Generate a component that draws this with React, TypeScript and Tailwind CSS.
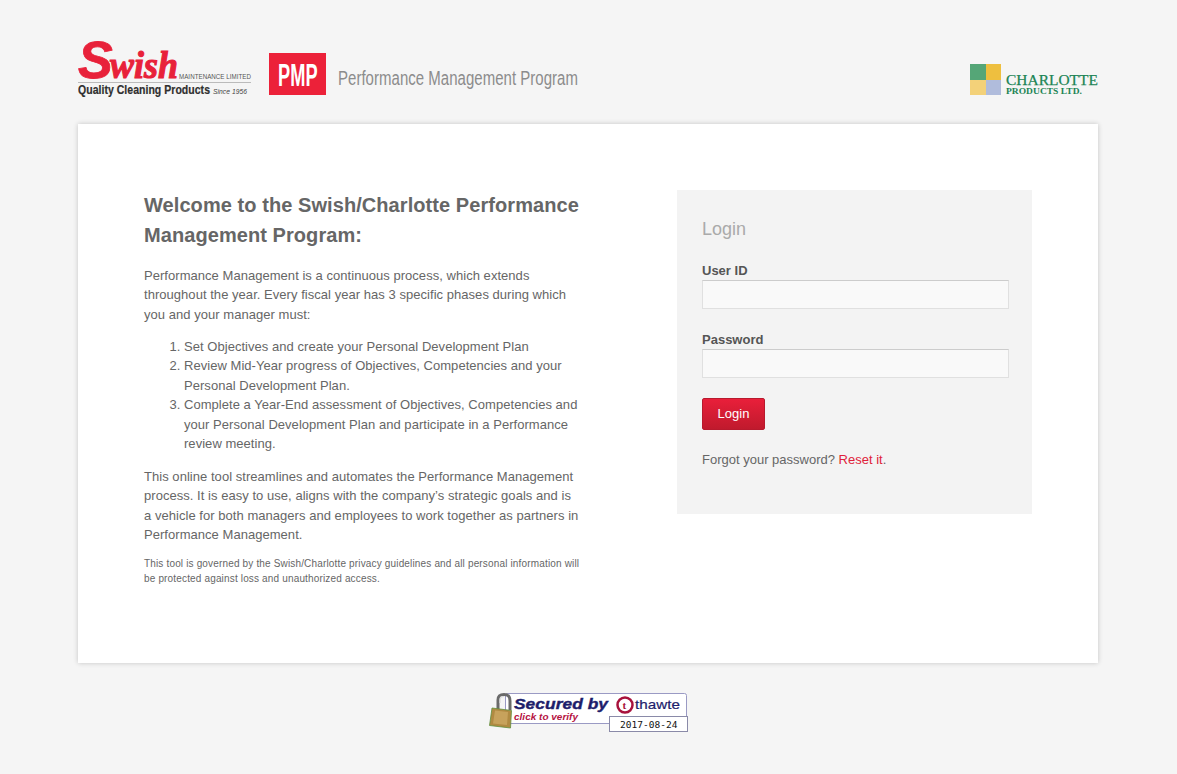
import { FormEvent } from "react"

const sans = "font-['Liberation_Sans',Arial,sans-serif]"
const narrow = "font-['Liberation_Sans_Narrow',Arial,sans-serif]"

function SwishLogo() {
  return (
    <svg width="174" height="58" viewBox="0 0 174 58" className="block">
      <text x="0" y="38" fill="#e8213a" stroke="#e8213a" strokeWidth="0.8" className={`${sans} italic font-bold text-[52px]`}>S</text>
      <text x="32" y="38" fill="#e8213a" stroke="#e8213a" strokeWidth="1.1" textLength="68" lengthAdjust="spacingAndGlyphs" className="font-['Liberation_Serif',serif] italic font-bold text-[38px]">wish</text>
      <text x="101" y="39" fill="#555" textLength="72" lengthAdjust="spacingAndGlyphs" className={`${sans} text-[7px]`}>MAINTENANCE LIMITED</text>
      <rect x="0" y="42" width="173" height="1" fill="#bbb" />
      <text x="0" y="54" fill="#2f2f2f" stroke="#2f2f2f" strokeWidth="0.2" textLength="132" lengthAdjust="spacingAndGlyphs" className={`${narrow} font-bold text-[13px]`}>Quality Cleaning Products</text>
      <text x="135" y="54" fill="#444" textLength="34" lengthAdjust="spacingAndGlyphs" className={`${sans} italic text-[7px]`}>Since 1956</text>
    </svg>
  )
}

function CharlotteLogo() {
  return (
    <div className="flex items-center">
      <div className="grid grid-cols-2 w-[31px] h-[31px]">
        <div className="bg-[#55a677]" />
        <div className="bg-[#eebf3f]" />
        <div className="bg-[#f3d179]" />
        <div className="bg-[#b0bcdc]" />
      </div>
      <svg width="97" height="31" viewBox="0 0 97 31" className="block">
        <text x="5" y="21" fill="#1b8454" stroke="#1b8454" strokeWidth="0.25" textLength="92" lengthAdjust="spacingAndGlyphs" className="font-['Liberation_Serif',serif] text-[15px]">CHARLOTTE</text>
        <text x="5" y="30" fill="#1b8454" textLength="76" lengthAdjust="spacingAndGlyphs" className="font-['Liberation_Serif',serif] font-bold text-[9px]">PRODUCTS LTD.</text>
      </svg>
    </div>
  )
}

function ThawteSeal() {
  return (
    <svg width="200" height="40" viewBox="0 0 200 40" className="block">
      <rect x="17.5" y="0.5" width="181" height="30" rx="2" fill="#fff" stroke="#9a9ac4" />
      <rect x="121.5" y="23.5" width="78" height="15" fill="#fff" stroke="#8a8aa8" />
      <text x="26" y="16" fill="#1d1d6b" stroke="#1d1d6b" strokeWidth="0.4" textLength="94" lengthAdjust="spacingAndGlyphs" className={`${sans} italic font-bold text-[15.5px]`}>Secured by</text>
      <text x="26" y="27" fill="#b5123f" textLength="64" lengthAdjust="spacingAndGlyphs" className={`${sans} italic font-bold text-[9.5px]`}>click to verify</text>
      <circle cx="137" cy="12" r="7.5" fill="#fff" stroke="#a8123c" strokeWidth="2.5" />
      <text x="134.5" y="16" fill="#a8123c" className="font-['Liberation_Serif',serif] font-bold text-[11px]">t</text>
      <text x="147" y="16" fill="#1d1d6b" stroke="#1d1d6b" strokeWidth="0.2" textLength="45" lengthAdjust="spacingAndGlyphs" className={`${sans} text-[13px]`}>thawte</text>
      <text x="132" y="34.5" fill="#111" className="font-['DejaVu_Sans_Mono',monospace] text-[9.5px]">2017-08-24</text>
      {/* padlock */}
      <path d="M10 16 L10 7 C10 2 13 1.5 16 1.5 C20 1.5 22 3 22 8 L22 17" fill="none" stroke="#6a6a6a" strokeWidth="3" />
      <path d="M12 10 L12 7 C12 4.5 14 3.5 16 3.5" fill="none" stroke="#ddd" strokeWidth="1.2" />
      <path d="M4 15 L23.5 17.5 L22.5 35 L1.5 32.5 Z" fill="#b08a42" stroke="#5f8f3e" strokeWidth="0.8" />
      <path d="M7 17.5 L20 19 L19 32 L5 30.5 Z" fill="#c7a25c" />
    </svg>
  )
}

function Field({ label, type }: { label: string; type: string }) {
  return (
    <div>
      <label className="block text-[13px] leading-[19px] font-bold text-[#555]">{label}</label>
      <input
        type={type}
        className="block w-[307px] h-[29px] bg-[#f9f9f9] border border-[#e0e0e0] border-t-[#ccc] outline-none"
      />
    </div>
  )
}

export default function App() {
  const entrar = (e: FormEvent) => e.preventDefault()

  return (
    <div className={`min-h-[774px] bg-[#f5f5f5] ${sans} text-[13px] leading-[19.5px] tracking-[0.04px] text-[#666]`}>
      <div className="w-[1020px] ml-[78px]">
        <header className="h-[124px] flex items-start justify-between">
          <div className="flex items-start pt-[40px]">
            <SwishLogo />
            <div className="ml-[17px] mt-[13px] w-[57px] h-[42px] bg-[#ec2139] flex items-center justify-center">
              <svg width="40" height="30" viewBox="0 0 40 30" className="block">
                <text x="0" y="26.5" fill="#fff" transform="scale(0.57 1)" className={`${narrow} font-bold text-[32px]`}>PMP</text>
              </svg>
            </div>
            <svg width="260" height="30" viewBox="0 0 260 30" className="block ml-[12px] mt-[23px]">
              <text x="0" y="22" fill="#8c8c8c" textLength="240" lengthAdjust="spacingAndGlyphs" className={`${narrow} text-[20px]`}>Performance Management Program</text>
            </svg>
          </div>
          <div className="pt-[64px]">
            <CharlotteLogo />
          </div>
        </header>

        <main className="bg-white shadow-[0_0_5px_rgba(0,0,0,0.2)] pt-[66px] pb-[77px] pl-[66px] flex items-start">
          <section className="w-[437px]">
            <h1 className="text-[20px] leading-[30px] font-bold tracking-[0.07px] text-[#666]">
              Welcome to the Swish/Charlotte Performance Management Program:
            </h1>
            <p className="mt-[15.5px]">
              Performance Management is a continuous process, which extends throughout the year. Every fiscal year has 3 specific phases during which you and your manager must:
            </p>
            <ol className="list-decimal pl-10 mt-[12.5px]">
              <li>Set Objectives and create your Personal Development Plan</li>
              <li>Review Mid-Year progress of Objectives, Competencies and your Personal Development Plan.</li>
              <li>Complete a Year-End assessment of Objectives, Competencies and your Personal Development Plan and participate in a Performance review meeting.</li>
            </ol>
            <p className="mt-[13px]">
              This online tool streamlines and automates the Performance Management process. It is easy to use, aligns with the company’s strategic goals and is a vehicle for both managers and employees to work together as partners in Performance Management.
            </p>
            <p className="mt-[11px] text-[10px] leading-[15px] tracking-[0.16px]">
              This tool is governed by the Swish/Charlotte privacy guidelines and all personal information will be protected against loss and unauthorized access.
            </p>
          </section>

          <form onSubmit={entrar} className="ml-[96px] w-[355px] h-[324px] bg-[#f3f3f3] px-[25px] pt-[26px] tracking-normal">
            <h2 className="text-[18px] leading-[27px] text-[#aaa]">Login</h2>
            <div className="mt-[18px] flex flex-col gap-[21px]">
              <Field label="User ID" type="text" />
              <Field label="Password" type="password" />
            </div>
            <button
              type="submit"
              className="mt-[20px] block w-[63px] h-[32px] rounded-[2px] border border-[#b8192d] bg-gradient-to-b from-[#e91f3a] to-[#c01a2d] text-white text-[13px]"
            >
              Login
            </button>
            <p className="mt-[20px]">
              Forgot your password? <a href="#" className="text-[#e0213a]">Reset it</a>.
            </p>
          </form>
        </main>

        <footer className="flex justify-center pt-[30px]">
          <ThawteSeal />
        </footer>
      </div>
    </div>
  )
}
